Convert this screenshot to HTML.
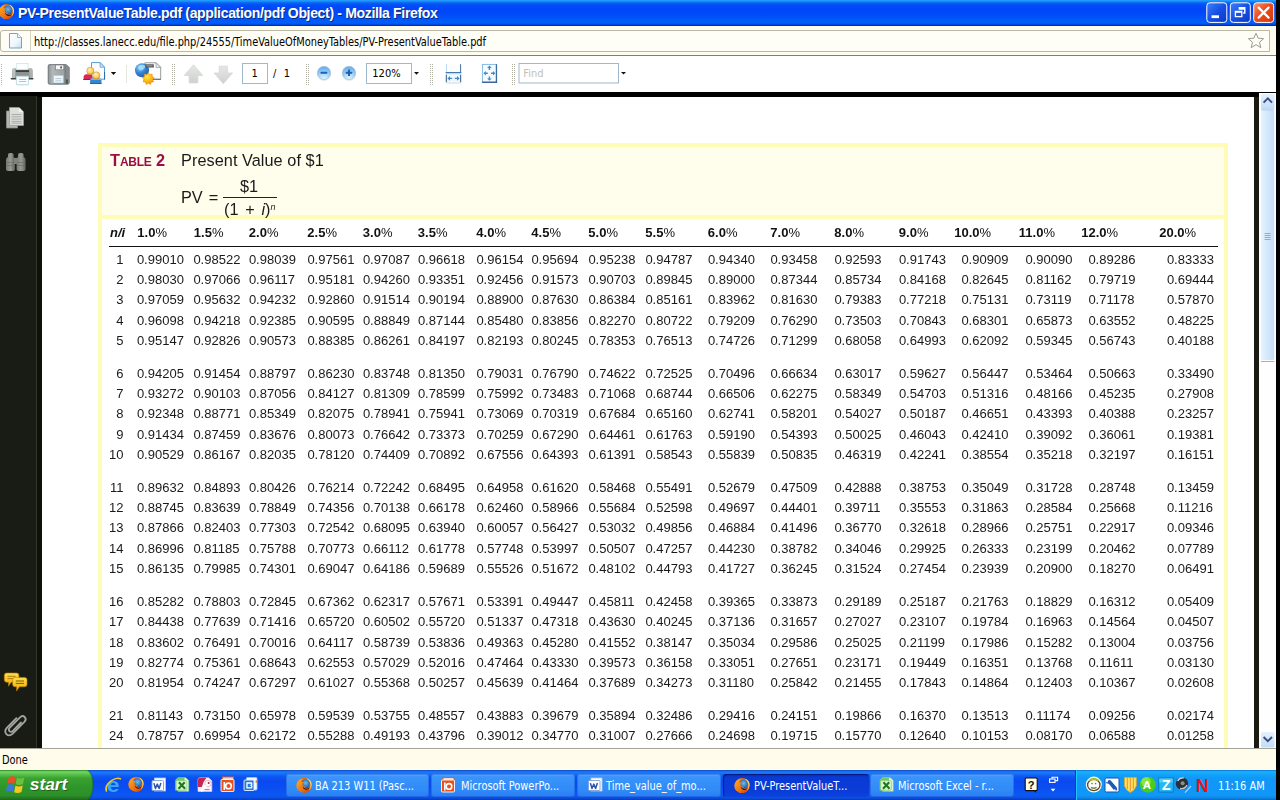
<!DOCTYPE html>
<html lang="en">
<head>
<meta charset="utf-8">
<title>PV-PresentValueTable.pdf (application/pdf Object) - Mozilla Firefox</title>
<style>
html,body{margin:0;padding:0}
body{width:1280px;height:800px;position:relative;overflow:hidden;background:#fff;font-family:"Liberation Sans",sans-serif;color:#000}
.abs{position:absolute}
#titlebar{position:absolute;left:0;top:0;width:1280px;height:26px;
 background:linear-gradient(to bottom,#24a2fc 0%,#1a8cf8 5%,#0866f4 11%,#0250f6 18%,#0048f8 28%,#0046f8 45%,#004ef8 60%,#0058fa 74%,#005efa 88%,#0052ea 93%,#0030c0 97%,#0020a8 100%)}
#title{position:absolute;left:18px;top:5px;font-family:"Liberation Sans",sans-serif;font-weight:bold;font-size:14px;letter-spacing:-0.33px;line-height:16px;color:#fff;white-space:nowrap;text-shadow:1px 1px 0 #0a2a80}
.wb{position:absolute;top:3px;width:19px;height:19px;border:1px solid #fff;border-radius:3px;background:linear-gradient(135deg,#3c7df0 0%,#1c57d8 50%,#1446c0 100%)}
#addr{position:absolute;left:0;top:26px;width:1276px;height:29px;background:#fdfcee}
#urlbox{position:absolute;left:0px;top:4px;width:1268px;height:20px;border:1px solid #b9b8a6;border-radius:3px 0 0 3px;background:#fffef6}
#urltext{position:absolute;left:34px;top:9px;font-family:"DejaVu Sans Condensed","Liberation Sans",sans-serif;font-size:12px;transform:scaleX(0.91);transform-origin:0 0;line-height:14px;white-space:nowrap;color:#000}
#toolbar{position:absolute;left:0;top:55px;width:1276px;height:37px;background:#fff;border-top:1px solid #7e7e72;box-sizing:border-box}
#viewer{position:absolute;left:0;top:92px;width:1276px;height:656px;background:#000}
#side{position:absolute;left:0;top:3.5px;width:36px;height:652.5px;background:#191b15}
#page{position:absolute;left:42px;top:5px;width:1212px;height:651px;background:#fff;overflow:hidden}
#vscroll{position:absolute;left:1259px;top:1px;width:17px;height:655px;background:#fdfdfd}
#status{position:absolute;left:0;top:748px;width:1276px;height:22px;background:#fffcec;border-top:1px solid #a4a498;border-bottom:1px solid #fffffa;box-sizing:border-box}
#taskbar{position:absolute;left:0;top:770px;width:1280px;height:30px;
 background:linear-gradient(to bottom,#0c48c8 0%,#1868ec 4%,#1c7afa 9%,#1468f6 15%,#0c54f2 23%,#0a4af0 36%,#0a4ef2 60%,#0c58f2 84%,#0b50e4 92%,#0a44c8 97%,#083aae 100%)}
#redge{position:absolute;left:1276px;top:0;width:4px;height:800px;background:#000}
#tray{position:absolute;left:1075px;top:0;width:205px;height:30px;border-left:1px solid #0a3cb4;box-shadow:inset 1px 0 0 #20c8fc;
 background:linear-gradient(to bottom,#0c70d8 0%,#18b4fc 6%,#14a4fa 14%,#1098f8 26%,#1096f8 60%,#1098f8 84%,#0e88e8 93%,#0a68c0 100%)}
.tb{position:absolute;top:3.5px;height:23px;border-radius:3px;background:linear-gradient(to bottom,#58acfc 0%,#3a94fa 12%,#308af8 70%,#2a7ef2 100%);box-shadow:inset 0 0 0 1px rgba(10,50,200,0.3)}
.tb.act{background:linear-gradient(to bottom,#082cb0 0%,#0a3ad4 15%,#0a3cd8 80%,#0c44e0 100%);box-shadow:inset 1px 1px 1px rgba(0,0,60,0.5)}
.tt{position:absolute;top:5.5px;font-family:"DejaVu Sans Condensed","Liberation Sans",sans-serif;font-size:12px;line-height:14px;color:#fff;white-space:nowrap;transform:scaleX(0.91);transform-origin:0 0;z-index:2}
/* pdf */
#tbl2{color:#9c0c46;font-weight:bold;white-space:nowrap;line-height:18px}
.T{font-size:16.3px}.sc{font-size:12px;letter-spacing:-0.3px}
.pv{font-size:16.3px;line-height:18px;white-space:nowrap;color:#1a1a1a}
#ybox{position:absolute;left:56px;top:45.8px;width:1122px;height:700px;border:4.2px solid #fffcb8;background:#fff}
#yhead{position:absolute;left:0;top:0;width:1122px;height:68.6px;background:#fffeec;border-bottom:4.5px solid #fffcb8}
.hr{position:absolute;left:0;top:0}
.h{position:absolute;top:127.6px;font-weight:bold;font-size:13px;line-height:16px;white-space:nowrap;color:#111}
.p{font-weight:normal}
.r{position:absolute;left:0;height:16px}
.c,.n{position:absolute;top:0;font-size:13px;line-height:16px;white-space:nowrap;color:#1a1a1a}
.n{width:23.5px;left:58px;text-align:right}
</style>
</head>
<body>
<div id="titlebar">
 <div id="title">PV-PresentValueTable.pdf (application/pdf Object) - Mozilla Firefox</div>
 <svg class="abs" style="left:0;top:0" width="1280" height="26" viewBox="0 0 1280 26">
  <defs>
   <linearGradient id="wbB" x1="0" y1="0" x2="1" y2="1"><stop offset="0" stop-color="#4080f8"/><stop offset="0.5" stop-color="#1650e4"/><stop offset="1" stop-color="#0a38c8"/></linearGradient>
   <linearGradient id="wbR" x1="0" y1="0" x2="1" y2="1"><stop offset="0" stop-color="#f49470"/><stop offset="0.45" stop-color="#ec4c1c"/><stop offset="1" stop-color="#d03808"/></linearGradient>
   <radialGradient id="ffG" cx="0.5" cy="0.4" r="0.6"><stop offset="0" stop-color="#6ac0f0"/><stop offset="1" stop-color="#1a4aa8"/></radialGradient>
   <linearGradient id="ffF" x1="0" y1="0" x2="1" y2="1"><stop offset="0" stop-color="#ffb020"/><stop offset="0.6" stop-color="#f07010"/><stop offset="1" stop-color="#d03808"/></linearGradient>
  </defs>
  <!-- firefox icon -->
  <use href="#ffx" x="-1.6" y="3.8"/>
  <!-- buttons -->
  <rect x="1206.8" y="2.8" width="20" height="19.6" rx="3" fill="url(#wbB)" stroke="#fff" stroke-width="1"/>
  <rect x="1211.5" y="15.3" width="7.5" height="2.8" fill="#fff"/>
  <rect x="1230.3" y="2.8" width="20" height="19.6" rx="3" fill="url(#wbB)" stroke="#fff" stroke-width="1"/>
  <path d="M1238.6 7.6 h6.2 v5.4 h-1.6 M1238.6 9 h6.2" fill="none" stroke="#fff" stroke-width="1.4"/>
  <rect x="1235.4" y="11.4" width="6.4" height="5.2" fill="none" stroke="#fff" stroke-width="1.3"/>
  <rect x="1235.4" y="11.2" width="6.4" height="1.6" fill="#fff"/>
  <rect x="1253.7" y="2.8" width="20" height="19.6" rx="3" fill="url(#wbR)" stroke="#fff" stroke-width="1"/>
  <path d="M1258.6 7.6 l10 10 M1268.6 7.6 l-10 10" stroke="#fff" stroke-width="2.2" stroke-linecap="round"/>
 </svg>
</div>
<div id="addr">
 <div id="urlbox"></div>
 <svg class="abs" style="left:0;top:0" width="1276" height="29" viewBox="0 26 1276 29">
  <defs><linearGradient id="pgI" x1="0" y1="0" x2="1" y2="1"><stop offset="0" stop-color="#ffffff"/><stop offset="0.6" stop-color="#eef6fc"/><stop offset="1" stop-color="#bfe0f4"/></linearGradient></defs>
  <rect x="30" y="31" width="1" height="20" fill="#d4d3c2"/>
  <path d="M9.5 33.5 h8 l4 4 v10.5 h-12z" fill="url(#pgI)" stroke="#7f9fc4" stroke-width="1"/>
  <path d="M17.5 33.5 v4 h4" fill="#f4f9fd" stroke="#7f9fc4" stroke-width="0.8"/>
  <path d="M1256 33.2 l2.2 5 5.4 0.5 -4.1 3.6 1.3 5.3 -4.8-2.9 -4.8 2.9 1.3-5.3 -4.1-3.6 5.4-0.5z" fill="#fffef6" stroke="#9a9a92" stroke-width="1" stroke-linejoin="round"/>
 </svg>
 <div id="urltext">http://classes.lanecc.edu/file.php/24555/TimeValueOfMoneyTables/PV-PresentValueTable.pdf</div>
</div>
<div id="toolbar">
<svg class="abs" style="left:0;top:-1px" width="1276" height="37" viewBox="0 55 1276 37">
 <defs>
  <linearGradient id="gPrB" x1="0" y1="0" x2="0" y2="1"><stop offset="0" stop-color="#a8acaa"/><stop offset="0.5" stop-color="#8a908e"/><stop offset="1" stop-color="#787e7c"/></linearGradient>
  <linearGradient id="gPr" x1="0" y1="0" x2="0" y2="1"><stop offset="0" stop-color="#b8bcbc"/><stop offset="0.25" stop-color="#6e7476"/><stop offset="0.6" stop-color="#9aa0a2"/><stop offset="1" stop-color="#70777a"/></linearGradient>
  <linearGradient id="gFl" x1="0" y1="0" x2="1" y2="0"><stop offset="0" stop-color="#8c9294"/><stop offset="0.2" stop-color="#b2b8ba"/><stop offset="0.8" stop-color="#9aa0a2"/><stop offset="1" stop-color="#6c7274"/></linearGradient>
  <radialGradient id="gHead" cx="0.4" cy="0.35" r="0.7"><stop offset="0" stop-color="#fff4b0"/><stop offset="0.6" stop-color="#fcd264"/><stop offset="1" stop-color="#e8a034"/></radialGradient>
  <radialGradient id="gGlobe" cx="0.35" cy="0.3" r="0.8"><stop offset="0" stop-color="#8cd0fc"/><stop offset="0.5" stop-color="#3484d0"/><stop offset="1" stop-color="#1c58a8"/></radialGradient>
  <radialGradient id="gBall" cx="0.5" cy="0.95" r="0.85"><stop offset="0" stop-color="#e4f6ff"/><stop offset="0.45" stop-color="#b0dafa"/><stop offset="1" stop-color="#6cb0ec"/></radialGradient>
  <radialGradient id="gStar" cx="0.4" cy="0.35" r="0.7"><stop offset="0" stop-color="#ffe840"/><stop offset="0.55" stop-color="#fcb818"/><stop offset="1" stop-color="#f48c08"/></radialGradient>
  <linearGradient id="gArr" x1="0" y1="0" x2="0" y2="1"><stop offset="0" stop-color="#e6e8e6"/><stop offset="1" stop-color="#cfd1cf"/></linearGradient>
  <pattern id="grip" x="0" y="0" width="2" height="2" patternUnits="userSpaceOnUse"><rect x="0" y="0" width="1" height="1" fill="#b4b4a4"/></pattern>
 </defs>
 <!-- grippers -->
 <g fill="#b0b0a6">
  <g id="gr1"><rect x="1" y="64" width="1" height="1"/><rect x="1" y="66" width="1" height="1"/><rect x="1" y="68" width="1" height="1"/><rect x="1" y="70" width="1" height="1"/><rect x="1" y="72" width="1" height="1"/><rect x="1" y="74" width="1" height="1"/><rect x="1" y="76" width="1" height="1"/><rect x="1" y="78" width="1" height="1"/><rect x="1" y="80" width="1" height="1"/><rect x="1" y="82" width="1" height="1"/><rect x="1" y="84" width="1" height="1"/></g>
  <use href="#gr1" x="171"/><use href="#gr1" x="173"/>
  <use href="#gr1" x="305"/><use href="#gr1" x="307"/>
  <use href="#gr1" x="429"/><use href="#gr1" x="431"/>
  <use href="#gr1" x="511"/><use href="#gr1" x="513"/>
 </g>
 <!-- printer -->
 <g>
  <rect x="12.2" y="68.2" width="20.4" height="10.6" rx="1.8" fill="url(#gPrB)"/>
  <rect x="15.6" y="69.6" width="13.4" height="2.6" fill="#3a403e"/>
  <rect x="15.6" y="72.2" width="13.4" height="4" fill="#8e9492"/>
  <rect x="12.4" y="68.6" width="3" height="9.6" rx="1.4" fill="#c6cac6" opacity="0.85"/>
  <rect x="29.4" y="68.6" width="3" height="9.6" rx="1.4" fill="#b4b8b4" opacity="0.85"/>
  <rect x="16.3" y="63.5" width="11.8" height="6.2" fill="#fdfefe" stroke="#cfe4ec" stroke-width="0.8"/>
  <rect x="10.6" y="77.9" width="23" height="1.7" rx="0.8" fill="#3e4442"/>
  <rect x="16.3" y="76.2" width="12.2" height="8.2" fill="#fbfdfe" stroke="#b4d6e2" stroke-width="0.8"/>
  <rect x="19.2" y="79" width="7" height="0.9" fill="#b4b8ba"/><rect x="19.2" y="81" width="7" height="0.9" fill="#b4b8ba"/>
  <rect x="17" y="84.8" width="11" height="0.8" fill="#dfeaee"/>
 </g>
 <!-- floppy -->
 <g transform="translate(0 0.6)">
  <path d="M48.2 65.4 q0-1.4 1.4-1.4 h16.6 l3 3 v15.2 q0 1.4 -1.4 1.4 h-18.2 q-1.4 0 -1.4-1.4z" fill="url(#gFl)" stroke="#5f6668" stroke-width="0.8"/>
  <path d="M65 64.2 h1.2 l2.8 2.8 v16.4 h-4z" fill="#878d8f"/>
  <rect x="64.6" y="64.4" width="0.8" height="19" fill="#6a7072"/>
  <rect x="55.6" y="64.4" width="8.2" height="4.8" fill="#f6f7f7" stroke="#6e7476" stroke-width="0.6"/>
  <rect x="60.2" y="65.8" width="1.8" height="2" fill="#7a4a4c"/>
  <rect x="53.2" y="82" width="10.4" height="1.5" fill="#4a86b0"/>
  <rect x="53.6" y="74.8" width="9.6" height="7.6" fill="#eef7fc" stroke="#a4cce0" stroke-width="0.7"/>
  <rect x="55.4" y="77.6" width="6" height="0.9" fill="#b4c4cc"/><rect x="55.4" y="79.8" width="6" height="0.9" fill="#b4c4cc"/>
  <rect x="65.8" y="78.8" width="2.2" height="4.4" fill="#50565a"/>
 </g>
 <!-- people + doc -->
 <g>
  <path d="M91.5 62.6 h8.6 l4.4 4.6 v12 h-13z" fill="#fbfdff" stroke="#5a9cd0" stroke-width="1"/>
  <path d="M100.1 62.6 v4.6 h4.4z" fill="#cfe8f8" stroke="#5a9cd0" stroke-width="0.8"/>
  <rect x="104" y="72" width="1.1" height="7.6" fill="#2c6ca8"/>
  <path d="M83.6 79.6 v-2.4 q0-2.9 3-2.9 h3 q3 0 3 2.9 v2.4z" fill="#d8285a"/>
  <rect x="83.2" y="79" width="9.4" height="0.9" fill="#8c1030"/>
  <circle cx="90.3" cy="70.9" r="3.6" fill="url(#gHead)" stroke="#c8842c" stroke-width="0.5"/>
  <path d="M90.1 83.7 v-2.6 q0-2.6 2.6-2.6 h6.2 q2.6 0 2.6 2.6 v2.6z" fill="#3088d4"/>
  <rect x="90.4" y="78.6" width="10.8" height="1.4" rx="0.7" fill="#6cbcf4"/>
  <rect x="90" y="83" width="11.6" height="0.9" fill="#1c5c9c"/>
  <circle cx="96.3" cy="75.4" r="3.6" fill="url(#gHead)" stroke="#c8842c" stroke-width="0.5"/>
  <path d="M110.8 72 h5.4 l-2.7 2.9z" fill="#111"/>
 </g>
 <rect x="126" y="65" width="1" height="18" fill="#e6e6de"/>
 <!-- globe/doc/star -->
 <g>
  <path d="M144.9 62.8 h11.2 l4.6 4.6 v11.6 h-15.8z" fill="#fcfcfc" stroke="#8a8e8e" stroke-width="0.9"/>
  <circle cx="142" cy="70.3" r="7" fill="url(#gGlobe)"/>
  <path d="M138.2 66.4 q3.6-3 7.4-0.6 q-0.8 3.8 -4.6 4.6 q-3-0.6 -2.8-4z" fill="#b4e6ff" opacity="0.75"/>
  <rect x="145.4" y="64.3" width="8.4" height="3.2" fill="#4c504e"/>
  <rect x="146.4" y="65.2" width="6.2" height="1.3" fill="#949896"/>
  <path d="M156.1 62.8 v4.6 h4.6z" fill="#eceeee" stroke="#8a8e8e" stroke-width="0.7"/>
  <rect x="150" y="79" width="11" height="0.9" fill="#6c7070"/>
  <path d="M148.3 72.7 L149.8 74.6 L152.2 74.1 L152.2 76.5 L154.3 77.7 L152.7 79.6 L153.6 81.8 L151.2 82.2 L150.4 84.5 L148.3 83.3 L146.2 84.5 L145.4 82.2 L143.0 81.8 L143.9 79.6 L142.3 77.7 L144.4 76.5 L144.4 74.1 L146.8 74.6z" fill="url(#gStar)" stroke="#e88a08" stroke-width="0.5" stroke-linejoin="round"/>
 </g>
 <!-- up / down arrows (disabled) -->
 <path d="M193.5 64.8 l9.3 10.7 h-4.9 v7.4 h-8.8 v-7.4 h-4.9z" fill="url(#gArr)" stroke="#d6d8d6" stroke-width="0.8"/>
 <path d="M223.3 83.7 l9.3-10.7 h-5.2 v-6.8 h-8.2 v6.8 h-5.2z" fill="url(#gArr)" stroke="#d6d8d6" stroke-width="0.8"/>
 <!-- page box -->
 <rect x="242.5" y="63.5" width="25" height="20" fill="#fff" stroke="#9fb8cc" stroke-width="1"/>
 <text x="254.6" y="77" font-family="DejaVu Sans Condensed, Liberation Sans, sans-serif" font-size="11" text-anchor="middle" fill="#000">1</text>
 <text x="273" y="77" font-family="DejaVu Sans Condensed, Liberation Sans, sans-serif" font-size="11" fill="#000">/</text>
 <text x="283.8" y="77" font-family="DejaVu Sans Condensed, Liberation Sans, sans-serif" font-size="11" fill="#000">1</text>
 <!-- zoom out / in -->
 <g>
  <circle cx="324" cy="74" r="7" fill="#d5e4ee" opacity="0.7"/>
  <circle cx="324" cy="72.9" r="6.6" fill="url(#gBall)" stroke="#a4c0d4" stroke-width="0.7"/>
  <rect x="320.6" y="71.7" width="6.6" height="2" rx="0.5" fill="#1f5fb4"/>
  <circle cx="349" cy="74" r="7" fill="#d5e4ee" opacity="0.7"/>
  <circle cx="349" cy="72.9" r="6.6" fill="url(#gBall)" stroke="#a4c0d4" stroke-width="0.7"/>
  <rect x="345.8" y="71.7" width="6.4" height="2" rx="0.5" fill="#1f5fb4"/>
  <rect x="348" y="69.5" width="2" height="6.4" rx="0.5" fill="#1f5fb4"/>
 </g>
 <!-- zoom box -->
 <rect x="366.5" y="63.5" width="45" height="20" fill="#fff" stroke="#9fb8cc" stroke-width="1"/>
 <text x="372.3" y="77" font-family="DejaVu Sans Condensed, Liberation Sans, sans-serif" font-size="11" fill="#000">120%</text>
 <path d="M414 72 h5 l-2.5 2.8z" fill="#111"/>
 <!-- fit width -->
 <g>
  <rect x="446" y="64.2" width="15" height="8" fill="#fbfdff"/>
  <rect x="446" y="64.2" width="1" height="8" fill="#bcd8ee"/><rect x="460" y="64.2" width="1.1" height="8" fill="#5a7c9e"/>
  <rect x="445.6" y="72" width="15.8" height="1.1" fill="#3c78b4"/>
  <rect x="445.8" y="73.4" width="15.4" height="0.9" fill="#9cc8ec"/>
  <rect x="446" y="74.4" width="15" height="8" fill="#eff8fe"/>
  <rect x="445.8" y="74.6" width="1.1" height="7.8" fill="#44688c"/><rect x="460.1" y="74.6" width="1.1" height="7.8" fill="#44688c"/>
  <path d="M447.4 78.4 l2.6-2.3 v1.6 h2.2 v1.4 h-2.2 v1.6z M459.6 78.4 l-2.6-2.3 v1.6 h-2.2 v1.4 h2.2 v1.6z" fill="#3f8ccc"/>
  <rect x="447" y="82.6" width="14" height="0.9" fill="#cdd6dc"/>
 </g>
 <!-- fit page -->
 <g>
  <rect x="482.4" y="64.4" width="14" height="17.8" fill="#f6fbff" stroke="#7cb4e0" stroke-width="0.9"/>
  <rect x="495.8" y="64.2" width="1.3" height="18.6" fill="#3a6c9e"/><rect x="482" y="81.6" width="15.1" height="1.3" fill="#2e5c8c"/>
  <path d="M489.4 65.6 l2.3 2.4 h-1.6 v2 h-1.4 v-2 h-1.6z M489.4 80.8 l2.3-2.4 h-1.6 v-2 h-1.4 v2 h-1.6z M483.4 73.2 l2.4-2.3 v1.6 h2 v1.4 h-2 v1.6z M495.4 73.2 l-2.4-2.3 v1.6 h-2 v1.4 h2 v1.6z" fill="#3f8ccc"/>
 </g>
 <!-- find box -->
 <rect x="519" y="63.5" width="99.5" height="19.5" fill="#fff" stroke="#9fb8cc" stroke-width="1"/>
 <text x="523.3" y="77" font-family="DejaVu Sans Condensed, Liberation Sans, sans-serif" font-size="11" fill="#c2c2b4">Find</text>
 <path d="M621 72 h5 l-2.5 2.6z" fill="#111"/>
</svg>

</div>
<div id="viewer">
 <div id="side"></div>
 <div class="abs" style="left:36px;top:4px;width:1px;height:652px;background:#34362e"></div>
 <svg class="abs" style="left:0;top:0" width="42" height="656" viewBox="0 92 42 656">
  <defs>
   <linearGradient id="bub" x1="0" y1="0" x2="0" y2="1"><stop offset="0" stop-color="#ffe04a"/><stop offset="1" stop-color="#f0a808"/></linearGradient>
   <linearGradient id="bino" x1="0" y1="0" x2="1" y2="0"><stop offset="0" stop-color="#787a72"/><stop offset="0.5" stop-color="#989a92"/><stop offset="1" stop-color="#5e6058"/></linearGradient>
  </defs>
  <!-- pages icon -->
  <path d="M6.5 111 h11 v17 h-11z" fill="#b4b6b0" stroke="#8a8c86" stroke-width="0.8"/>
  <path d="M9.5 107.5 h9.5 l4.5 4.5 v13.5 h-14z" fill="#dcdeda" stroke="#9a9c96" stroke-width="0.8"/>
  <path d="M19 107.5 v4.5 h4.5z" fill="#f2f3f0"/>
  <g stroke="#a4a6a0" stroke-width="0.9"><path d="M11.5 114.5 h10 M11.5 116.8 h10 M11.5 119.1 h10 M11.5 121.4 h10 M11.5 123.2 h10"/></g>
  <!-- binoculars -->
  <g>
   <path d="M6 160 q0-2.5 2-3 v-2.5 q0-1.5 2-1.5 h1.6 q2 0 2 1.5 v2.5 q1.4 0.6 1.4 3 v9 q0 2 -2 2 h-5 q-2 0 -2-2z" fill="url(#bino)"/>
   <path d="M16.6 160 q0-2.5 1.4-3 v-2.5 q0-1.5 2-1.5 h1.6 q2 0 2 1.5 v2.5 q2 0.6 2 3 v9 q0 2 -2 2 h-5 q-2 0 -2-2z" fill="url(#bino)"/>
   <rect x="14" y="158" width="4" height="6" fill="#80827c"/>
   <path d="M6.4 162.5 h8 M17 162.5 h8 M6.4 165.5 h8 M17 165.5 h8" stroke="#6a6c66" stroke-width="0.7"/>
  </g>
  <!-- comments -->
  <g>
   <path d="M6.5 673 h10 q2.4 0 2.4 2.4 v4.4 q0 2.4 -2.4 2.4 h-5.4 l-2.6 4 v-4 h-2 q-2.2 0 -2.2-2.4 v-4.4 q0-2.4 2.2-2.4z" fill="url(#bub)" stroke="#b87c00" stroke-width="0.6"/>
   <path d="M7.5 676.3 h8 M7.5 678.6 h8" stroke="#a87400" stroke-width="0.9"/>
   <path d="M15 677.4 h9.6 q2.4 0 2.4 2.4 v4.6 q0 2.4 -2.4 2.4 h-5.2 l-2.8 4.2 v-4.2 h-1.6 q-2.4 0 -2.4-2.4 v-4.6 q0-2.4 2.4-2.4z" fill="url(#bub)" stroke="#b87c00" stroke-width="0.6"/>
   <path d="M15.8 681 h8.2 M15.8 683.4 h8.2" stroke="#805800" stroke-width="1"/>
  </g>
  <!-- paperclip -->
  <path d="M21 722.5 l-8.2 8.4 q-1.8 1.8 -3.4 0.2 q-1.4-1.6 0.4-3.4 l10.2-10.4 q2.6-2.4 4.8-0.2 q2 2.4 -0.4 4.8 l-11.6 11.8 q-3.6 3.2 -6.4 0.4 q-2.6-3 0.6-6.4 l9.4-9.6" fill="none" stroke="#a2a4a0" stroke-width="1.8" stroke-linecap="round"/>
 </svg>
 <div id="page">
  <div id="ybox"><div id="yhead"></div></div>
  <div id="pdftext" style="will-change:transform">
   <div class="abs" id="tbl2" style="left:68px;top:54.4px"><span class="T">T</span><span class="sc">ABLE</span><span class="T"> 2</span></div>
   <div class="abs pv" style="left:139px;top:54.4px;letter-spacing:0.05px">Present Value of $1</div>
   <div class="abs pv" style="left:139px;top:91px;word-spacing:1.5px">PV =</div>
   <div class="abs pv" style="left:198px;top:80px">$1</div>
   <div class="abs" style="left:181px;top:99.5px;width:54px;height:1px;background:#222"></div>
   <div class="abs pv" style="left:182px;top:103.4px;word-spacing:2.2px">(1 + <i>i</i>)<span style="font-size:9px;position:relative;top:-5px"><i>n</i></span></div>
   <div class="abs" style="left:67px;top:148.5px;width:1109px;height:1.6px;background:#111"></div>
<div class="hr"><span class="h ni" style="left:68px"><i>n/i</i></span><span class="h" style="left:95.3px">1.0<span class="p">%</span></span><span class="h" style="left:151.8px">1.5<span class="p">%</span></span><span class="h" style="left:206.8px">2.0<span class="p">%</span></span><span class="h" style="left:265.3px">2.5<span class="p">%</span></span><span class="h" style="left:320.8px">3.0<span class="p">%</span></span><span class="h" style="left:375.8px">3.5<span class="p">%</span></span><span class="h" style="left:434.3px">4.0<span class="p">%</span></span><span class="h" style="left:489.3px">4.5<span class="p">%</span></span><span class="h" style="left:546.3px">5.0<span class="p">%</span></span><span class="h" style="left:603.3px">5.5<span class="p">%</span></span><span class="h" style="left:665.8px">6.0<span class="p">%</span></span><span class="h" style="left:728.3px">7.0<span class="p">%</span></span><span class="h" style="left:792.3px">8.0<span class="p">%</span></span><span class="h" style="left:856.8px">9.0<span class="p">%</span></span><span class="h" style="left:912.3px">10.0<span class="p">%</span></span><span class="h" style="left:976.8px">11.0<span class="p">%</span></span><span class="h" style="left:1039.3px">12.0<span class="p">%</span></span><span class="h" style="left:1117.3px">20.0<span class="p">%</span></span></div>
<div class="r" style="top:154.75px"><span class="n">1</span><span class="c" style="left:94.9px">0.99010</span><span class="c" style="left:151.4px">0.98522</span><span class="c" style="left:206.9px">0.98039</span><span class="c" style="left:265.4px">0.97561</span><span class="c" style="left:320.9px">0.97087</span><span class="c" style="left:375.9px">0.96618</span><span class="c" style="left:434.4px">0.96154</span><span class="c" style="left:489.4px">0.95694</span><span class="c" style="left:546.4px">0.95238</span><span class="c" style="left:603.4px">0.94787</span><span class="c" style="left:665.9px">0.94340</span><span class="c" style="left:728.4px">0.93458</span><span class="c" style="left:792.4px">0.92593</span><span class="c" style="left:856.9px">0.91743</span><span class="c" style="left:919.4px">0.90909</span><span class="c" style="left:983.4px">0.90090</span><span class="c" style="left:1046.4px">0.89286</span><span class="c" style="left:1124.9px">0.83333</span></div>
<div class="r" style="top:175.05px"><span class="n">2</span><span class="c" style="left:94.9px">0.98030</span><span class="c" style="left:151.4px">0.97066</span><span class="c" style="left:206.9px">0.96117</span><span class="c" style="left:265.4px">0.95181</span><span class="c" style="left:320.9px">0.94260</span><span class="c" style="left:375.9px">0.93351</span><span class="c" style="left:434.4px">0.92456</span><span class="c" style="left:489.4px">0.91573</span><span class="c" style="left:546.4px">0.90703</span><span class="c" style="left:603.4px">0.89845</span><span class="c" style="left:665.9px">0.89000</span><span class="c" style="left:728.4px">0.87344</span><span class="c" style="left:792.4px">0.85734</span><span class="c" style="left:856.9px">0.84168</span><span class="c" style="left:919.4px">0.82645</span><span class="c" style="left:983.4px">0.81162</span><span class="c" style="left:1046.4px">0.79719</span><span class="c" style="left:1124.9px">0.69444</span></div>
<div class="r" style="top:195.35px"><span class="n">3</span><span class="c" style="left:94.9px">0.97059</span><span class="c" style="left:151.4px">0.95632</span><span class="c" style="left:206.9px">0.94232</span><span class="c" style="left:265.4px">0.92860</span><span class="c" style="left:320.9px">0.91514</span><span class="c" style="left:375.9px">0.90194</span><span class="c" style="left:434.4px">0.88900</span><span class="c" style="left:489.4px">0.87630</span><span class="c" style="left:546.4px">0.86384</span><span class="c" style="left:603.4px">0.85161</span><span class="c" style="left:665.9px">0.83962</span><span class="c" style="left:728.4px">0.81630</span><span class="c" style="left:792.4px">0.79383</span><span class="c" style="left:856.9px">0.77218</span><span class="c" style="left:919.4px">0.75131</span><span class="c" style="left:983.4px">0.73119</span><span class="c" style="left:1046.4px">0.71178</span><span class="c" style="left:1124.9px">0.57870</span></div>
<div class="r" style="top:215.65px"><span class="n">4</span><span class="c" style="left:94.9px">0.96098</span><span class="c" style="left:151.4px">0.94218</span><span class="c" style="left:206.9px">0.92385</span><span class="c" style="left:265.4px">0.90595</span><span class="c" style="left:320.9px">0.88849</span><span class="c" style="left:375.9px">0.87144</span><span class="c" style="left:434.4px">0.85480</span><span class="c" style="left:489.4px">0.83856</span><span class="c" style="left:546.4px">0.82270</span><span class="c" style="left:603.4px">0.80722</span><span class="c" style="left:665.9px">0.79209</span><span class="c" style="left:728.4px">0.76290</span><span class="c" style="left:792.4px">0.73503</span><span class="c" style="left:856.9px">0.70843</span><span class="c" style="left:919.4px">0.68301</span><span class="c" style="left:983.4px">0.65873</span><span class="c" style="left:1046.4px">0.63552</span><span class="c" style="left:1124.9px">0.48225</span></div>
<div class="r" style="top:235.95px"><span class="n">5</span><span class="c" style="left:94.9px">0.95147</span><span class="c" style="left:151.4px">0.92826</span><span class="c" style="left:206.9px">0.90573</span><span class="c" style="left:265.4px">0.88385</span><span class="c" style="left:320.9px">0.86261</span><span class="c" style="left:375.9px">0.84197</span><span class="c" style="left:434.4px">0.82193</span><span class="c" style="left:489.4px">0.80245</span><span class="c" style="left:546.4px">0.78353</span><span class="c" style="left:603.4px">0.76513</span><span class="c" style="left:665.9px">0.74726</span><span class="c" style="left:728.4px">0.71299</span><span class="c" style="left:792.4px">0.68058</span><span class="c" style="left:856.9px">0.64993</span><span class="c" style="left:919.4px">0.62092</span><span class="c" style="left:983.4px">0.59345</span><span class="c" style="left:1046.4px">0.56743</span><span class="c" style="left:1124.9px">0.40188</span></div>
<div class="r" style="top:268.80px"><span class="n">6</span><span class="c" style="left:94.9px">0.94205</span><span class="c" style="left:151.4px">0.91454</span><span class="c" style="left:206.9px">0.88797</span><span class="c" style="left:265.4px">0.86230</span><span class="c" style="left:320.9px">0.83748</span><span class="c" style="left:375.9px">0.81350</span><span class="c" style="left:434.4px">0.79031</span><span class="c" style="left:489.4px">0.76790</span><span class="c" style="left:546.4px">0.74622</span><span class="c" style="left:603.4px">0.72525</span><span class="c" style="left:665.9px">0.70496</span><span class="c" style="left:728.4px">0.66634</span><span class="c" style="left:792.4px">0.63017</span><span class="c" style="left:856.9px">0.59627</span><span class="c" style="left:919.4px">0.56447</span><span class="c" style="left:983.4px">0.53464</span><span class="c" style="left:1046.4px">0.50663</span><span class="c" style="left:1124.9px">0.33490</span></div>
<div class="r" style="top:289.10px"><span class="n">7</span><span class="c" style="left:94.9px">0.93272</span><span class="c" style="left:151.4px">0.90103</span><span class="c" style="left:206.9px">0.87056</span><span class="c" style="left:265.4px">0.84127</span><span class="c" style="left:320.9px">0.81309</span><span class="c" style="left:375.9px">0.78599</span><span class="c" style="left:434.4px">0.75992</span><span class="c" style="left:489.4px">0.73483</span><span class="c" style="left:546.4px">0.71068</span><span class="c" style="left:603.4px">0.68744</span><span class="c" style="left:665.9px">0.66506</span><span class="c" style="left:728.4px">0.62275</span><span class="c" style="left:792.4px">0.58349</span><span class="c" style="left:856.9px">0.54703</span><span class="c" style="left:919.4px">0.51316</span><span class="c" style="left:983.4px">0.48166</span><span class="c" style="left:1046.4px">0.45235</span><span class="c" style="left:1124.9px">0.27908</span></div>
<div class="r" style="top:309.40px"><span class="n">8</span><span class="c" style="left:94.9px">0.92348</span><span class="c" style="left:151.4px">0.88771</span><span class="c" style="left:206.9px">0.85349</span><span class="c" style="left:265.4px">0.82075</span><span class="c" style="left:320.9px">0.78941</span><span class="c" style="left:375.9px">0.75941</span><span class="c" style="left:434.4px">0.73069</span><span class="c" style="left:489.4px">0.70319</span><span class="c" style="left:546.4px">0.67684</span><span class="c" style="left:603.4px">0.65160</span><span class="c" style="left:665.9px">0.62741</span><span class="c" style="left:728.4px">0.58201</span><span class="c" style="left:792.4px">0.54027</span><span class="c" style="left:856.9px">0.50187</span><span class="c" style="left:919.4px">0.46651</span><span class="c" style="left:983.4px">0.43393</span><span class="c" style="left:1046.4px">0.40388</span><span class="c" style="left:1124.9px">0.23257</span></div>
<div class="r" style="top:329.70px"><span class="n">9</span><span class="c" style="left:94.9px">0.91434</span><span class="c" style="left:151.4px">0.87459</span><span class="c" style="left:206.9px">0.83676</span><span class="c" style="left:265.4px">0.80073</span><span class="c" style="left:320.9px">0.76642</span><span class="c" style="left:375.9px">0.73373</span><span class="c" style="left:434.4px">0.70259</span><span class="c" style="left:489.4px">0.67290</span><span class="c" style="left:546.4px">0.64461</span><span class="c" style="left:603.4px">0.61763</span><span class="c" style="left:665.9px">0.59190</span><span class="c" style="left:728.4px">0.54393</span><span class="c" style="left:792.4px">0.50025</span><span class="c" style="left:856.9px">0.46043</span><span class="c" style="left:919.4px">0.42410</span><span class="c" style="left:983.4px">0.39092</span><span class="c" style="left:1046.4px">0.36061</span><span class="c" style="left:1124.9px">0.19381</span></div>
<div class="r" style="top:350.00px"><span class="n">10</span><span class="c" style="left:94.9px">0.90529</span><span class="c" style="left:151.4px">0.86167</span><span class="c" style="left:206.9px">0.82035</span><span class="c" style="left:265.4px">0.78120</span><span class="c" style="left:320.9px">0.74409</span><span class="c" style="left:375.9px">0.70892</span><span class="c" style="left:434.4px">0.67556</span><span class="c" style="left:489.4px">0.64393</span><span class="c" style="left:546.4px">0.61391</span><span class="c" style="left:603.4px">0.58543</span><span class="c" style="left:665.9px">0.55839</span><span class="c" style="left:728.4px">0.50835</span><span class="c" style="left:792.4px">0.46319</span><span class="c" style="left:856.9px">0.42241</span><span class="c" style="left:919.4px">0.38554</span><span class="c" style="left:983.4px">0.35218</span><span class="c" style="left:1046.4px">0.32197</span><span class="c" style="left:1124.9px">0.16151</span></div>
<div class="r" style="top:382.85px"><span class="n">11</span><span class="c" style="left:94.9px">0.89632</span><span class="c" style="left:151.4px">0.84893</span><span class="c" style="left:206.9px">0.80426</span><span class="c" style="left:265.4px">0.76214</span><span class="c" style="left:320.9px">0.72242</span><span class="c" style="left:375.9px">0.68495</span><span class="c" style="left:434.4px">0.64958</span><span class="c" style="left:489.4px">0.61620</span><span class="c" style="left:546.4px">0.58468</span><span class="c" style="left:603.4px">0.55491</span><span class="c" style="left:665.9px">0.52679</span><span class="c" style="left:728.4px">0.47509</span><span class="c" style="left:792.4px">0.42888</span><span class="c" style="left:856.9px">0.38753</span><span class="c" style="left:919.4px">0.35049</span><span class="c" style="left:983.4px">0.31728</span><span class="c" style="left:1046.4px">0.28748</span><span class="c" style="left:1124.9px">0.13459</span></div>
<div class="r" style="top:403.15px"><span class="n">12</span><span class="c" style="left:94.9px">0.88745</span><span class="c" style="left:151.4px">0.83639</span><span class="c" style="left:206.9px">0.78849</span><span class="c" style="left:265.4px">0.74356</span><span class="c" style="left:320.9px">0.70138</span><span class="c" style="left:375.9px">0.66178</span><span class="c" style="left:434.4px">0.62460</span><span class="c" style="left:489.4px">0.58966</span><span class="c" style="left:546.4px">0.55684</span><span class="c" style="left:603.4px">0.52598</span><span class="c" style="left:665.9px">0.49697</span><span class="c" style="left:728.4px">0.44401</span><span class="c" style="left:792.4px">0.39711</span><span class="c" style="left:856.9px">0.35553</span><span class="c" style="left:919.4px">0.31863</span><span class="c" style="left:983.4px">0.28584</span><span class="c" style="left:1046.4px">0.25668</span><span class="c" style="left:1124.9px">0.11216</span></div>
<div class="r" style="top:423.45px"><span class="n">13</span><span class="c" style="left:94.9px">0.87866</span><span class="c" style="left:151.4px">0.82403</span><span class="c" style="left:206.9px">0.77303</span><span class="c" style="left:265.4px">0.72542</span><span class="c" style="left:320.9px">0.68095</span><span class="c" style="left:375.9px">0.63940</span><span class="c" style="left:434.4px">0.60057</span><span class="c" style="left:489.4px">0.56427</span><span class="c" style="left:546.4px">0.53032</span><span class="c" style="left:603.4px">0.49856</span><span class="c" style="left:665.9px">0.46884</span><span class="c" style="left:728.4px">0.41496</span><span class="c" style="left:792.4px">0.36770</span><span class="c" style="left:856.9px">0.32618</span><span class="c" style="left:919.4px">0.28966</span><span class="c" style="left:983.4px">0.25751</span><span class="c" style="left:1046.4px">0.22917</span><span class="c" style="left:1124.9px">0.09346</span></div>
<div class="r" style="top:443.75px"><span class="n">14</span><span class="c" style="left:94.9px">0.86996</span><span class="c" style="left:151.4px">0.81185</span><span class="c" style="left:206.9px">0.75788</span><span class="c" style="left:265.4px">0.70773</span><span class="c" style="left:320.9px">0.66112</span><span class="c" style="left:375.9px">0.61778</span><span class="c" style="left:434.4px">0.57748</span><span class="c" style="left:489.4px">0.53997</span><span class="c" style="left:546.4px">0.50507</span><span class="c" style="left:603.4px">0.47257</span><span class="c" style="left:665.9px">0.44230</span><span class="c" style="left:728.4px">0.38782</span><span class="c" style="left:792.4px">0.34046</span><span class="c" style="left:856.9px">0.29925</span><span class="c" style="left:919.4px">0.26333</span><span class="c" style="left:983.4px">0.23199</span><span class="c" style="left:1046.4px">0.20462</span><span class="c" style="left:1124.9px">0.07789</span></div>
<div class="r" style="top:464.05px"><span class="n">15</span><span class="c" style="left:94.9px">0.86135</span><span class="c" style="left:151.4px">0.79985</span><span class="c" style="left:206.9px">0.74301</span><span class="c" style="left:265.4px">0.69047</span><span class="c" style="left:320.9px">0.64186</span><span class="c" style="left:375.9px">0.59689</span><span class="c" style="left:434.4px">0.55526</span><span class="c" style="left:489.4px">0.51672</span><span class="c" style="left:546.4px">0.48102</span><span class="c" style="left:603.4px">0.44793</span><span class="c" style="left:665.9px">0.41727</span><span class="c" style="left:728.4px">0.36245</span><span class="c" style="left:792.4px">0.31524</span><span class="c" style="left:856.9px">0.27454</span><span class="c" style="left:919.4px">0.23939</span><span class="c" style="left:983.4px">0.20900</span><span class="c" style="left:1046.4px">0.18270</span><span class="c" style="left:1124.9px">0.06491</span></div>
<div class="r" style="top:496.90px"><span class="n">16</span><span class="c" style="left:94.9px">0.85282</span><span class="c" style="left:151.4px">0.78803</span><span class="c" style="left:206.9px">0.72845</span><span class="c" style="left:265.4px">0.67362</span><span class="c" style="left:320.9px">0.62317</span><span class="c" style="left:375.9px">0.57671</span><span class="c" style="left:434.4px">0.53391</span><span class="c" style="left:489.4px">0.49447</span><span class="c" style="left:546.4px">0.45811</span><span class="c" style="left:603.4px">0.42458</span><span class="c" style="left:665.9px">0.39365</span><span class="c" style="left:728.4px">0.33873</span><span class="c" style="left:792.4px">0.29189</span><span class="c" style="left:856.9px">0.25187</span><span class="c" style="left:919.4px">0.21763</span><span class="c" style="left:983.4px">0.18829</span><span class="c" style="left:1046.4px">0.16312</span><span class="c" style="left:1124.9px">0.05409</span></div>
<div class="r" style="top:517.20px"><span class="n">17</span><span class="c" style="left:94.9px">0.84438</span><span class="c" style="left:151.4px">0.77639</span><span class="c" style="left:206.9px">0.71416</span><span class="c" style="left:265.4px">0.65720</span><span class="c" style="left:320.9px">0.60502</span><span class="c" style="left:375.9px">0.55720</span><span class="c" style="left:434.4px">0.51337</span><span class="c" style="left:489.4px">0.47318</span><span class="c" style="left:546.4px">0.43630</span><span class="c" style="left:603.4px">0.40245</span><span class="c" style="left:665.9px">0.37136</span><span class="c" style="left:728.4px">0.31657</span><span class="c" style="left:792.4px">0.27027</span><span class="c" style="left:856.9px">0.23107</span><span class="c" style="left:919.4px">0.19784</span><span class="c" style="left:983.4px">0.16963</span><span class="c" style="left:1046.4px">0.14564</span><span class="c" style="left:1124.9px">0.04507</span></div>
<div class="r" style="top:537.50px"><span class="n">18</span><span class="c" style="left:94.9px">0.83602</span><span class="c" style="left:151.4px">0.76491</span><span class="c" style="left:206.9px">0.70016</span><span class="c" style="left:265.4px">0.64117</span><span class="c" style="left:320.9px">0.58739</span><span class="c" style="left:375.9px">0.53836</span><span class="c" style="left:434.4px">0.49363</span><span class="c" style="left:489.4px">0.45280</span><span class="c" style="left:546.4px">0.41552</span><span class="c" style="left:603.4px">0.38147</span><span class="c" style="left:665.9px">0.35034</span><span class="c" style="left:728.4px">0.29586</span><span class="c" style="left:792.4px">0.25025</span><span class="c" style="left:856.9px">0.21199</span><span class="c" style="left:919.4px">0.17986</span><span class="c" style="left:983.4px">0.15282</span><span class="c" style="left:1046.4px">0.13004</span><span class="c" style="left:1124.9px">0.03756</span></div>
<div class="r" style="top:557.80px"><span class="n">19</span><span class="c" style="left:94.9px">0.82774</span><span class="c" style="left:151.4px">0.75361</span><span class="c" style="left:206.9px">0.68643</span><span class="c" style="left:265.4px">0.62553</span><span class="c" style="left:320.9px">0.57029</span><span class="c" style="left:375.9px">0.52016</span><span class="c" style="left:434.4px">0.47464</span><span class="c" style="left:489.4px">0.43330</span><span class="c" style="left:546.4px">0.39573</span><span class="c" style="left:603.4px">0.36158</span><span class="c" style="left:665.9px">0.33051</span><span class="c" style="left:728.4px">0.27651</span><span class="c" style="left:792.4px">0.23171</span><span class="c" style="left:856.9px">0.19449</span><span class="c" style="left:919.4px">0.16351</span><span class="c" style="left:983.4px">0.13768</span><span class="c" style="left:1046.4px">0.11611</span><span class="c" style="left:1124.9px">0.03130</span></div>
<div class="r" style="top:578.10px"><span class="n">20</span><span class="c" style="left:94.9px">0.81954</span><span class="c" style="left:151.4px">0.74247</span><span class="c" style="left:206.9px">0.67297</span><span class="c" style="left:265.4px">0.61027</span><span class="c" style="left:320.9px">0.55368</span><span class="c" style="left:375.9px">0.50257</span><span class="c" style="left:434.4px">0.45639</span><span class="c" style="left:489.4px">0.41464</span><span class="c" style="left:546.4px">0.37689</span><span class="c" style="left:603.4px">0.34273</span><span class="c" style="left:665.9px">0.31180</span><span class="c" style="left:728.4px">0.25842</span><span class="c" style="left:792.4px">0.21455</span><span class="c" style="left:856.9px">0.17843</span><span class="c" style="left:919.4px">0.14864</span><span class="c" style="left:983.4px">0.12403</span><span class="c" style="left:1046.4px">0.10367</span><span class="c" style="left:1124.9px">0.02608</span></div>
<div class="r" style="top:610.95px"><span class="n">21</span><span class="c" style="left:94.9px">0.81143</span><span class="c" style="left:151.4px">0.73150</span><span class="c" style="left:206.9px">0.65978</span><span class="c" style="left:265.4px">0.59539</span><span class="c" style="left:320.9px">0.53755</span><span class="c" style="left:375.9px">0.48557</span><span class="c" style="left:434.4px">0.43883</span><span class="c" style="left:489.4px">0.39679</span><span class="c" style="left:546.4px">0.35894</span><span class="c" style="left:603.4px">0.32486</span><span class="c" style="left:665.9px">0.29416</span><span class="c" style="left:728.4px">0.24151</span><span class="c" style="left:792.4px">0.19866</span><span class="c" style="left:856.9px">0.16370</span><span class="c" style="left:919.4px">0.13513</span><span class="c" style="left:983.4px">0.11174</span><span class="c" style="left:1046.4px">0.09256</span><span class="c" style="left:1124.9px">0.02174</span></div>
<div class="r" style="top:631.25px"><span class="n">24</span><span class="c" style="left:94.9px">0.78757</span><span class="c" style="left:151.4px">0.69954</span><span class="c" style="left:206.9px">0.62172</span><span class="c" style="left:265.4px">0.55288</span><span class="c" style="left:320.9px">0.49193</span><span class="c" style="left:375.9px">0.43796</span><span class="c" style="left:434.4px">0.39012</span><span class="c" style="left:489.4px">0.34770</span><span class="c" style="left:546.4px">0.31007</span><span class="c" style="left:603.4px">0.27666</span><span class="c" style="left:665.9px">0.24698</span><span class="c" style="left:728.4px">0.19715</span><span class="c" style="left:792.4px">0.15770</span><span class="c" style="left:856.9px">0.12640</span><span class="c" style="left:919.4px">0.10153</span><span class="c" style="left:983.4px">0.08170</span><span class="c" style="left:1046.4px">0.06588</span><span class="c" style="left:1124.9px">0.01258</span></div>
  </div>
 </div>
 <div class="abs" style="left:1254px;top:5px;width:5px;height:651px;background:#191b13"></div>
 <div class="abs" style="left:37px;top:5px;width:5px;height:651px;background:#0e100a"></div>
 <div id="vscroll">
  <svg class="abs" style="left:0;top:0" width="17" height="655" viewBox="1259 93 17 655">
   <defs>
    <linearGradient id="thb" x1="0" y1="0" x2="1" y2="0"><stop offset="0" stop-color="#e6f3fe"/><stop offset="0.5" stop-color="#d2e8fb"/><stop offset="1" stop-color="#c4def7"/></linearGradient>
    <linearGradient id="sbtn" x1="0" y1="0" x2="0" y2="1"><stop offset="0" stop-color="#e4f1fd"/><stop offset="1" stop-color="#c2dcf6"/></linearGradient>
   </defs>
   <rect x="1259" y="93" width="17" height="655" fill="#fefefe"/>
   <rect x="1261" y="94" width="13.5" height="15" rx="1.5" fill="url(#sbtn)"/>
   <path d="M1263.6 102.6 l4.2-4.2 4.2 4.2" fill="none" stroke="#3a4f84" stroke-width="2"/>
   <rect x="1261" y="110" width="13.2" height="250" rx="1.5" fill="url(#thb)"/>
   <rect x="1261" y="109.4" width="13.2" height="0.9" fill="#a8bce0"/>
   <rect x="1261" y="361" width="13.2" height="1" fill="#9cb0d4"/>
   <path d="M1264.6 233.5 h6 M1264.6 235.5 h6 M1264.6 237.5 h6 M1264.6 239.5 h6" stroke="#8ea4cc" stroke-width="0.9"/>
   <rect x="1261" y="732" width="13.5" height="15.5" rx="1.5" fill="url(#sbtn)"/>
   <path d="M1263.6 737 l4.2 4.2 4.2-4.2" fill="none" stroke="#3a4f84" stroke-width="2"/>
  </svg>
 </div>
</div>
<div id="status"><span class="abs" style="left:2px;top:3.5px;font-family:'DejaVu Sans Condensed','Liberation Sans',sans-serif;font-size:12px;line-height:14px;transform:scaleX(0.91);transform-origin:0 0">Done</span></div>
<div id="taskbar">
<div id="tray"></div>
<div class="tb" style="left:286px;width:143px"><span class="tt" style="left:29px">BA 213 W11 (Pasc...</span></div>
<div class="tb" style="left:431px;width:144px"><span class="tt" style="left:29.5px">Microsoft PowerPo...</span></div>
<div class="tb" style="left:577px;width:144px"><span class="tt" style="left:29px">Time_value_of_mo...</span></div>
<div class="tb act" style="left:722.5px;width:146px"><span class="tt" style="left:31px">PV-PresentValueT...</span></div>
<div class="tb" style="left:870px;width:143.5px"><span class="tt" style="left:27.7px">Microsoft Excel - r...</span></div>
<span class="tt" style="left:1217.5px;top:9px">11:16 AM</span>
<svg class="abs" style="left:0;top:0;z-index:3" width="1280" height="30" viewBox="0 770 1280 30">
 <defs>
  <linearGradient id="stG" x1="0" y1="0" x2="0" y2="1"><stop offset="0" stop-color="#2a8a20"/><stop offset="0.06" stop-color="#74d668"/><stop offset="0.15" stop-color="#58c04a"/><stop offset="0.27" stop-color="#3aa230"/><stop offset="0.55" stop-color="#2f962a"/><stop offset="0.85" stop-color="#2c9028"/><stop offset="1" stop-color="#1f661c"/></linearGradient>
  <radialGradient id="ffG2" cx="0.5" cy="0.4" r="0.6"><stop offset="0" stop-color="#6ac0f0"/><stop offset="1" stop-color="#1a4aa8"/></radialGradient>
  <linearGradient id="ffF2" x1="0" y1="0" x2="1" y2="1"><stop offset="0" stop-color="#ffb020"/><stop offset="0.6" stop-color="#f07010"/><stop offset="1" stop-color="#d03808"/></linearGradient>
  <g id="ffx">
   <circle cx="8" cy="7.6" r="7.3" fill="#e8700c"/>
   <circle cx="9.6" cy="6.4" r="4.6" fill="url(#ffG2)"/>
   <path d="M0.8 5.6 q2-4.4 6.4-4.4 q-2.4 1.4 -2 3.4 q1.2-0.4 2.6 0.2 q-2 1.2 -1.2 3 q1.4 2 3.6 1.2 q-0.6 1.6 -2.8 1.8 q3 1.4 5.4-1 q1-1.6 0.8-3.6 q1.8 2.6 1 5 q-1.2 3.4 -5 4 q-4.6 0.6 -7.6-2.6 q-2.4-3 -1.2-7z" fill="url(#ffF2)"/>
   <path d="M6.6 8.8 q1.6 2.8 4.4 2.4 q2-0.4 2.8-1.8 q-0.6 2.4 -3.2 2.8 q-3.4 0 -4-3.4z" fill="#2c1606"/>
   <path d="M10.6 1 q4.2 0.8 5 5 q0.4 4.2 -2.6 6.8 q2.2-3.2 1.4-6.4 q-0.8-3.4 -3.8-5.4z" fill="#ffd84a"/>
  </g>
  <g id="ppt">
   <rect x="2" y="0.5" width="11" height="12" fill="#f4d8cc" stroke="#e05a28" stroke-width="1"/>
   <rect x="0.5" y="3" width="13" height="12" rx="1" fill="#e8501c" stroke="#fff" stroke-width="0.9"/>
   <circle cx="8" cy="9.4" r="3.6" fill="#fff"/><circle cx="8" cy="9.4" r="2" fill="#e8501c"/>
   <rect x="3" y="5.5" width="1.6" height="8" fill="#fff"/>
  </g>
  <g id="wrd">
   <rect x="3" y="0.5" width="11" height="13" fill="#f6f9ff" stroke="#b8c8e8" stroke-width="0.8"/>
   <rect x="0.5" y="3" width="11.5" height="10" rx="1" fill="#fff" stroke="#7f9fd8" stroke-width="0.9"/>
   <path d="M2.4 5.6 l1.6 5.4 1.8-4.4 1.8 4.4 1.8-5.4" fill="none" stroke="#2a55b0" stroke-width="1.5" stroke-linejoin="round"/>
  </g>
  <g id="xls">
   <path d="M3.4 0.8 h8 l2.8 2.8 v10.6 h-10.8z" fill="#f2fbef" stroke="#8cd080" stroke-width="0.8"/>
   <path d="M0.6 4.4 q0-3 3.4-3.4 h6 v3 h-5 v9.4 h-4.4z" fill="#74c868"/>
   <rect x="1.6" y="3.6" width="10.8" height="9.6" rx="1" fill="#dcf3d6" stroke="#7cc870" stroke-width="0.7"/>
   <path d="M4.4 5.2 l6.2 6.6 M10.2 5.2 l-6.2 6.6" stroke="#1c7a1c" stroke-width="2.1"/>
  </g>
 </defs>
 <!-- start button -->
 <path d="M0 770 h87.5 q5.5 3.5 5.5 15 q0 11.5 -5.5 15 h-87.5z" fill="url(#stG)"/>
 <path d="M87.5 770 q5.5 3.5 5.5 15 q0 11.5 -5.5 15" fill="none" stroke="#1c5c1c" stroke-width="1.2" opacity="0.5"/>
 <!-- flag -->
 <g transform="translate(15.2 784.4) scale(1.08) translate(-14.2 -784.4)">
  <path d="M8.2 777.6 q3.2-1.6 6.4 0.2 l-1.2 6 q-3-1.6 -6.2-0.2z" fill="#e8502a"/>
  <path d="M15.8 778.2 q3.4 1.6 6.8-0.2 l-1.2 6 q-3.4 1.6 -6.8 0.2z" fill="#6cc040"/>
  <path d="M6.8 785 q3.2-1.6 6.4 0.2 l-1.2 6 q-3-1.6 -6.2-0.2z" fill="#3c78e0"/>
  <path d="M14.4 785.6 q3.4 1.6 6.8-0.2 l-1.2 6 q-3.4 1.6 -6.8 0.2z" fill="#f8c820"/>
 </g>
 <text x="30.5" y="790.8" font-family="Liberation Sans, sans-serif" font-weight="bold" font-style="italic" font-size="16.5" fill="#1c4a1a" opacity="0.7" textLength="37.5" lengthAdjust="spacingAndGlyphs">start</text>
 <text x="29.8" y="790" font-family="Liberation Sans, sans-serif" font-weight="bold" font-style="italic" font-size="16.5" fill="#fff" textLength="37.5" lengthAdjust="spacingAndGlyphs">start</text>
 <!-- quick launch -->
 <g>
  <text x="106.4" y="791.8" font-family="Liberation Sans, sans-serif" font-weight="bold" font-size="21" fill="#38a8f4" textLength="13" lengthAdjust="spacingAndGlyphs">e</text>
  <path d="M106.4 791 q-2-5 5-10.4 q5.6-3.6 9-1.8" fill="none" stroke="#f4c428" stroke-width="1.6" stroke-linecap="round"/>
  <use href="#ffx" x="128" y="776.5"/>
  <use href="#wrd" x="151.5" y="777.5"/>
  <use href="#xls" x="174.5" y="777"/>
  <g>
   <path d="M198 779.4 q0.4-1.6 2-1.6 h8.6 l3.2 3 v10.6 h-13.8z" fill="#fbf4f6" stroke="#f0c8d4" stroke-width="0.7"/>
   <path d="M198 787 v-7.6 q0.4-1.6 2-1.6 h6.4 q-3 3.4 -4.6 9.2z" fill="#c42850"/>
   <circle cx="208" cy="783.6" r="3.2" fill="#fff" stroke="#d890a8" stroke-width="0.6"/><circle cx="208.6" cy="783" r="1" fill="#a02040"/>
   <path d="M206 785.8 l-5 5.4" stroke="#fff" stroke-width="2.4"/>
   <path d="M204.6 789.6 h5" stroke="#c04868" stroke-width="0.8"/>
  </g>
  <use href="#ppt" x="220.5" y="776.5"/>
  <g>
   <rect x="246.5" y="777.5" width="10.5" height="12.5" rx="1" fill="#f4f9ff" stroke="#9cc4f0" stroke-width="0.9"/>
   <rect x="244" y="780" width="10" height="10.5" rx="1" fill="#2a78d8" stroke="#e8f2ff" stroke-width="0.9"/>
   <path d="M247 783 h4.4 q1 1.4 -0.4 2.2 q1.6 1 0.4 2.6 h-4.4z" fill="none" stroke="#fff" stroke-width="1.3"/>
   <rect x="255.6" y="780.6" width="2" height="2" fill="#e86820"/>
  </g>
 </g>
 <!-- task button icons -->
 <use href="#ffx" x="296" y="777.5"/>
 <use href="#ppt" x="441" y="777"/>
 <use href="#wrd" x="588" y="777.5"/>
 <use href="#ffx" x="734" y="777.8"/>
 <use href="#xls" x="879" y="777"/>
 <!-- help + chevron -->
 <rect x="1025.2" y="778" width="12" height="12.6" rx="1" fill="#fffce0" stroke="#111" stroke-width="1.1"/>
 <path d="M1034 790.6 l1.6 2.4 0.4-2.4z" fill="#111"/>
 <text x="1031.2" y="788.6" font-family="Liberation Sans, sans-serif" font-weight="bold" font-size="11" text-anchor="middle" fill="#111">?</text>
 <g fill="none" stroke="#fff" stroke-width="1.1"><rect x="1049.6" y="779" width="5.4" height="3.4"/><path d="M1052 778.8 v-1.6 h5.6 v3.4 h-2.4"/></g>
 <path d="M1050.6 788.8 h4.8 l-2.4 2.6z" fill="#fff"/>
 <!-- tray icons -->
 <g>
  <circle cx="1093.8" cy="784.6" r="8" fill="#f8f8f4"/>
  <ellipse cx="1093.8" cy="785" rx="6.2" ry="5.6" fill="#fdfdfb" stroke="#5a4a20" stroke-width="1.3"/>
  <path d="M1089 780.4 q4.8-4 9.6 0 q-4.8-1.6 -9.6 0z" fill="#a8c030" stroke="#a8c030" stroke-width="1.2"/>
  <circle cx="1092" cy="783.6" r="0.8" fill="#b06030"/><circle cx="1095.6" cy="783.6" r="0.8" fill="#b06030"/>
  <path d="M1091 787.4 q2.8 1.6 5.6 0" fill="none" stroke="#708848" stroke-width="1.4"/>
  <rect x="1105" y="778" width="14" height="14" rx="1.5" fill="#fbfdff" stroke="#1a50b0" stroke-width="1"/>
  <path d="M1108 780.4 q2.6-1 3.8 1.4 l5 5.8 q1 2.4 -0.8 3.2 l-1-1.6 -1.4 0.6 l-4.8-6 q-2.6 0.4 -3.2-2 l2 0.8z" fill="#1c58b8"/>
  <path d="M1124.4 777.4 h12 v8.4 q-1.6 4.6 -6 6.8 q-4.4-2.2 -6-6.8z" fill="#ffe060" stroke="#e0a020" stroke-width="0.8"/>
  <path d="M1127.4 778 v11 M1130.4 778 v13.6 M1133.4 778 v11" stroke="#f0a030" stroke-width="1.2"/>
  <circle cx="1147.8" cy="784.7" r="8" fill="#48cc20"/>
  <circle cx="1146" cy="782" r="4.8" fill="#a0f050" opacity="0.7"/>
  <text x="1147" y="789" font-family="Liberation Sans, sans-serif" font-weight="bold" font-size="11.5" text-anchor="middle" fill="#fff">A</text>
  <rect x="1158.8" y="778" width="14.4" height="14" fill="#24b8f0" stroke="#0c6cb4" stroke-width="0.8"/><rect x="1159.2" y="778.4" width="13.6" height="4" fill="#6cdcfc" opacity="0.6"/>
  <text x="1166.2" y="790" font-family="Liberation Sans, sans-serif" font-weight="bold" font-size="14" text-anchor="middle" fill="#fff">Z</text>
  <circle cx="1182" cy="783.6" r="6.2" fill="#2c3034"/>
  <path d="M1177.6 781 q2-3.6 6-3" fill="none" stroke="#d8dce0" stroke-width="1.4"/><path d="M1180 788.6 q4.6 1 7-3.4" fill="none" stroke="#c0c4c8" stroke-width="1.6"/><circle cx="1182.6" cy="783.2" r="2" fill="#8c9094"/>
  <path d="M1191 786 l-6 6.6" stroke="#a4d4f8" stroke-width="1.2"/>
  <text x="1202.2" y="792.4" font-family="Liberation Sans, sans-serif" font-weight="bold" font-size="19" text-anchor="middle" fill="#e8141c" textLength="13" lengthAdjust="spacingAndGlyphs">N</text>
 </g>
</svg>

</div>
<div id="redge"></div>
</body>
</html>
